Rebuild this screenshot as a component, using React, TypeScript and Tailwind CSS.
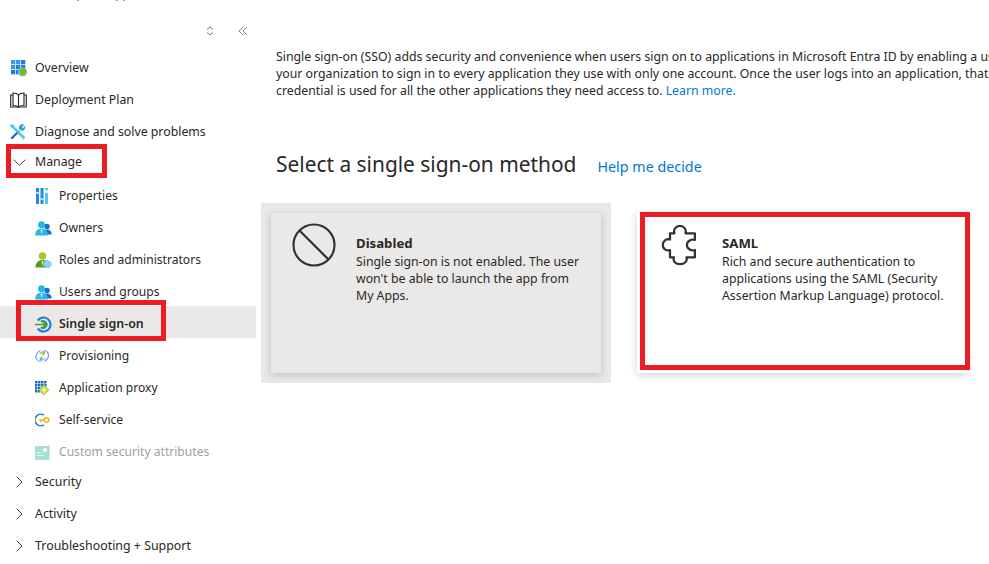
import React from "react";

const font = { fontFamily: '"Noto Sans", sans-serif' };

function Grid() {
  return (
    <svg width="17" height="17" viewBox="0 0 17 17">
      {[0, 5, 10].flatMap((y) => [0, 5, 10].map((x) => <rect key={`${x}-${y}`} x={x + 1} y={y} width="4.300" height="4.300" fill={x + y > 5 ? "#1f7fe0" : "#3a94ea"} />))}
      <circle cx="12.500" cy="12" r="4.500" fill="#7dbcf5" />
      <circle cx="13" cy="11.500" r="3.300" fill="#7fba00" />
    </svg>
  );
}
function Book() {
  return (
    <svg width="17" height="16" viewBox="0 0 17 16" fill="none" stroke="#222" strokeWidth="1.100">
      <path d="M3 3H.700v12h15.600V3H14" />
      <path d="M3 1c2.500 0 4.300 .5 5.500 2 1.200-1.500 3-2 5.500-2v12.500c-2.500 0-4.300.5-5.500 1.500-1.200-1-3-1.500-5.500-1.500z" />
      <path d="M8.500 3V15" />
    </svg>
  );
}
function Tools() {
  return (
    <svg width="16" height="16" viewBox="0 0 16 16">
      <path d="M.500 14l8-8 1.500 1.500-8 8z" fill="#0d6fb8" />
      <path d="M15.500 13.500l-2 2L3 4.500 .8 3.500 0 1 1.300 0l2.500 1 1 2z" fill="#50c8f0" />
      <path d="M10.500 .8c1.500-.8 3-.8 4 0l-2.500 2.200.8 1.200 2.200-2.200c.8 2-.5 5-3.500 4.800L9 5c-.2-1.800 .3-3.300 1.500-4.200z" fill="#2aa0de" />
    </svg>
  );
}
function Bars() {
  return (
    <svg width="14" height="16" viewBox="0 0 14 16">
      <rect x="1" y="0" width="3" height="16" fill="#1e88e5" />
      <rect x="5.500" y="0" width="3" height="16" fill="#1e88e5" />
      <rect x="10" y="0" width="3" height="16" fill="#50c8f0" />
      <rect x="1" y="4" width="3" height="2" fill="#a5e3f7" />
      <rect x="5.500" y="10" width="3" height="2" fill="#a5e3f7" />
      <rect x="10" y="2" width="3" height="3" fill="#d5f2fb" />
    </svg>
  );
}
function People() {
  return (
    <svg width="17" height="15" viewBox="0 0 17 15">
      <circle cx="12" cy="5.500" r="2.700" fill="#1c6fc4" />
      <path d="M7 13.500c0-3 2-5 5-5s4.700 2 4.700 5z" fill="#1c6fc4" />
      <circle cx="6.500" cy="3.800" r="3.500" fill="#29b6e8" />
      <path d="M.300 14.500c0-5 2.700-7 6.200-7s6.200 2 6.200 7z" fill="#29b6e8" />
      <path d="M6.500 8l-1 1 1 4 1-4z" fill="#d5f2fb" />
    </svg>
  );
}
function Roles() {
  return (
    <svg width="17" height="16" viewBox="0 0 17 16">
      <circle cx="7.500" cy="4" r="3.800" fill="#9ccc2c" />
      <path d="M.500 15.500c0-5 3-7.500 7-7.500s7 2.500 7 7.500z" fill="#5e9624" />
      <path d="M7.500 8.500l-1 1 1 5 1-5z" fill="#d8e8a8" />
      <path d="M12.500 8l4 2.300v3.700l-4 2-4-2v-3.700z" fill="#7fd3f5" />
    </svg>
  );
}
function Sso() {
  return (
    <svg width="17" height="17" viewBox="0 0 17 17" fill="none">
      <path d="M2.800 4.500A7 7 0 1 1 2.800 12.500" stroke="#1883d7" strokeWidth="2.200" />
      <path d="M5.800 5.700A3.600 3.600 0 1 1 5.800 11.300" stroke="#1883d7" strokeWidth="1.600" />
      <path d="M0 8.500h10.500M7 4.800l3.700 3.700L7 12.200" stroke="#57a300" strokeWidth="1.700" />
    </svg>
  );
}
function Prov() {
  return (
    <svg width="15" height="16" viewBox="0 0 15 16" fill="none">
      <path d="M9 2.500c3 .5 5 3 4.500 5.500s-2 4.500-4.500 5.500" stroke="#a67af4" strokeWidth="1.200" />
      <path d="M5.500 13.500C2 13 .500 10.500 1 8s2-4.500 4.500-5.500" stroke="#5ea0ef" strokeWidth="1.200" />
      <path d="M4.500 5h5M7.500 3l2 2-2 2" stroke="#7fba00" strokeWidth="1.100" />
      <path d="M10.500 11H5M7 9l-2 2 2 2" stroke="#32bedd" strokeWidth="1.100" />
    </svg>
  );
}
function Proxy() {
  return (
    <svg width="15" height="15" viewBox="0 0 15 15">
      {[0, 3, 6, 9].flatMap((y) => [0, 3, 6, 9].map((x) => <rect key={`${x}-${y}`} x={x} y={y} width="2.500" height="2.500" fill="#1e6fc4" />))}
      <path d="M9 3.500l5.500 5.500L9 14.500 3.500 9z" fill="#b8d432" />
      <path d="M9 6v6M6 9h6" stroke="#fff" strokeWidth="1.200" />
    </svg>
  );
}
function SelfService() {
  return (
    <svg width="15" height="14" viewBox="0 0 15 14" fill="none">
      <path d="M9 2.200A5.800 5.800 0 1 0 9 11.800" stroke="#1883d7" strokeWidth="1.600" />
      <circle cx="11.500" cy="7" r="2.300" stroke="#f5b400" strokeWidth="1.400" />
      <path d="M4 7h5.200M6 7v2" stroke="#f5b400" strokeWidth="1.400" />
    </svg>
  );
}
function Attr() {
  return (
    <svg width="15" height="15" viewBox="0 0 15 15">
      <rect x="0" y="1" width="14" height="14" fill="#a5dfd8" />
      <path d="M14 0v14h1V0z" fill="#c5ebe6" />
      <circle cx="10" cy="5" r="2" fill="#fff" />
      <path d="M1.500 8h5M1.500 10.500h7" stroke="#e8f8f6" strokeWidth="1" />
    </svg>
  );
}
function ChevronRight() {
  return (
    <svg width="7" height="12" viewBox="0 0 7 12" fill="none" stroke="#444" strokeWidth="1">
      <path d="M.700 .700L6 6 .700 11.300" />
    </svg>
  );
}
function ChevronDown() {
  return (
    <svg width="13" height="7" viewBox="0 0 13 7" fill="none" stroke="#444" strokeWidth="1">
      <path d="M.700 .700L6.500 6.300 12.300 .700" />
    </svg>
  );
}

function Row({ icon, label }: { icon: React.ReactNode; label: string }) {
  return (
    <div className="flex h-8 items-center pl-[10px] pt-[2px] text-[#292827]">
      <span className="flex w-[25px] justify-start">{icon}</span>
      <span>{label}</span>
    </div>
  );
}
function SubRow({ icon, label, active, muted }: { icon: React.ReactNode; label: string; active?: boolean; muted?: boolean }) {
  return (
    <div className={`flex h-8 items-center pl-[35px] pt-[4px] ${active ? "bg-[#ebe9e7] text-[12.4px] font-semibold text-[#292827]" : muted ? "text-[12.1px] text-[#a19f9d]" : "text-[12.1px] text-[#292827]"}`}>
      <span className="flex w-[24px] justify-start">{icon}</span>
      <span>{label}</span>
    </div>
  );
}
function Group({ label, open }: { label: string; open?: boolean }) {
  return open ? (
    <div className="flex h-[31px] items-center pl-[13px] text-[#292827]">
      <span className="flex w-[22px] justify-start">
        <ChevronDown />
      </span>
      <span>{label}</span>
    </div>
  ) : (
    <div className="flex h-8 items-center pl-[16px] text-[12.4px] text-[#292827]">
      <span className="flex w-[19px] justify-start">
        <ChevronRight />
      </span>
      <span>{label}</span>
    </div>
  );
}
function Card({ title, lines, icon, disabled, iconPad }: { title: string; lines: string[]; icon: React.ReactNode; disabled?: boolean; iconPad: string }) {
  return (
    <div className={`flex h-40 w-[330px] shadow-[0_2px_8px_rgba(0,0,0,0.18)] ${disabled ? "bg-[#ebe9e7]" : "bg-white"}`}>
      <div className={`w-[85px] shrink-0 pt-[10px] ${iconPad}`}>{icon}</div>
      <div className="pt-[22px] text-[12.3px] leading-[17px] text-[#292827]">
        <div className="mb-[1px] text-[13.2px] font-bold">{title}</div>
        {lines.map((l) => (
          <div key={l} className="whitespace-nowrap">
            {l}
          </div>
        ))}
      </div>
    </div>
  );
}

export default function App() {
  return (
    <div style={font} className="relative flex h-[564px] w-[989px] overflow-hidden bg-white text-[12.3px]">
      <aside className="w-[256px] shrink-0">
        <div className="-mt-[14px] h-[20px] pl-[46px] text-[12px] leading-[16px] text-[#0078d4]">Enterprise Application</div>
        <div className="flex h-[45px] items-start justify-end gap-[24px] pr-[8px] pt-[20px]">
          <svg width="8" height="10" viewBox="0 0 8 10" fill="none" stroke="#777">
            <path d="M1 3.500L4 1l3 2.500M1 6.500L4 9l3-2.500" />
          </svg>
          <svg width="10" height="10" viewBox="0 0 10 10" fill="none" stroke="#888">
            <path d="M5 1L1 5l4 4M9 1L5 5l4 4" />
          </svg>
        </div>
        <Row icon={<Grid />} label="Overview" />
        <Row icon={<Book />} label="Deployment Plan" />
        <Row icon={<Tools />} label="Diagnose and solve problems" />
        <Group label="Manage" open />
        <SubRow icon={<Bars />} label="Properties" />
        <SubRow icon={<People />} label="Owners" />
        <SubRow icon={<Roles />} label="Roles and administrators" />
        <SubRow icon={<People />} label="Users and groups" />
        <SubRow icon={<Sso />} label="Single sign-on" active />
        <SubRow icon={<Prov />} label="Provisioning" />
        <SubRow icon={<Proxy />} label="Application proxy" />
        <SubRow icon={<SelfService />} label="Self-service" />
        <SubRow icon={<Attr />} label="Custom security attributes" muted />
        <Group label="Security" />
        <Group label="Activity" />
        <Group label="Troubleshooting + Support" />
      </aside>
      <main className="min-w-0 flex-1 pl-[20px] pt-[48px]">
        <div className="text-[12.3px] leading-[17px] text-[#292827]">
          <div className="whitespace-nowrap">Single sign-on (SSO) adds security and convenience when users sign on to applications in Microsoft Entra ID by enabling a user in</div>
          <div className="whitespace-nowrap">your organization to sign in to every application they use with only one account. Once the user logs into an application, that</div>
          <div className="whitespace-nowrap">
            credential is used for all the other applications they need access to. <span className="text-[#0078d4]">Learn more.</span>
          </div>
        </div>
        <div className="mt-[50px] flex h-[30px] items-baseline gap-[21px]">
          <h1 className="text-[20.9px] leading-[30px] font-normal text-[#292827]">Select a single sign-on method</h1>
          <span className="text-[14.3px] text-[#0078d4]">Help me decide</span>
        </div>
        <div className="-ml-[15px] mt-[24px] flex gap-[26px]">
          <div className="bg-[#ebe9e7] p-[10px]">
            <Card
              disabled
              iconPad="pl-[21px]"
              title="Disabled"
              lines={["Single sign-on is not enabled. The user", "won't be able to launch the app from", "My Apps."]}
              icon={
                <svg width="44" height="44" viewBox="0 0 44 44" fill="none" stroke="#323130" strokeWidth="2.200">
                  <circle cx="22" cy="22" r="20.500" />
                  <path d="M7.500 7.500l29 29" />
                </svg>
              }
            />
          </div>
          <div className="pt-[10px]">
            <Card
              iconPad="pl-[24px]"
              title="SAML"
              lines={["Rich and secure authentication to", "applications using the SAML (Security", "Assertion Markup Language) protocol."]}
              icon={
                <svg width="35" height="42" viewBox="-1 -1 35 42" fill="none" stroke="#323130" strokeWidth="2.200" strokeLinejoin="round" className="mt-[1px]">
                  <path d="M8 8.300h4.500c-1.500-4 1.500-7.500 5.500-7.500s6.500 3.500 5.500 7.500H32.900V15c-3-1.500-8 1-8 5s5 6.500 8 5v7.300h-8.500c1.500 4-2 6.900-6.400 6.900s-7.500-3-6-6.900H8V25c-3 1.500-7.200-1-7.200-5S5 13 8 14.500z" />
                </svg>
              }
            />
          </div>
        </div>
      </main>
      <div className="absolute left-[6px] top-[144px] h-[34px] w-[101px] border-[5px] border-[#ed1c24]" />
      <div className="absolute left-[16px] top-[300px] h-[41px] w-[150px] border-[5px] border-[#ed1c24]" />
      <div className="absolute left-[640px] top-[212px] h-[158px] w-[330px] border-[5px] border-[#ed1c24]" />
    </div>
  );
}
